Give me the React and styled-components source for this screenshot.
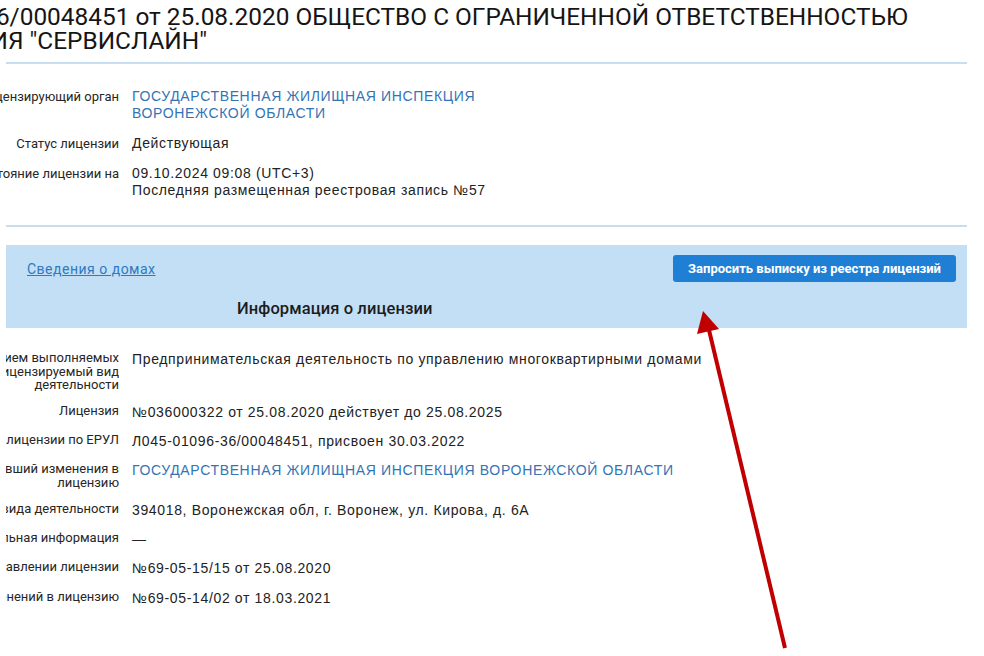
import React from 'react';
import styled, { createGlobalStyle } from 'styled-components';

const fontRoboto = 'Roboto, "Liberation Sans", Arial, sans-serif';
const fontArial = '"Liberation Sans", Arial, sans-serif';
const colorText = '#222222';
const colorLabel = '#262626';
const colorLink = '#3474b4';
const colorLine = '#c7ddf0';
const colorPanel = '#c3dff5';
const colorButton = '#1f7fd5';

const GlobalStyle = createGlobalStyle`
  html, body {
    margin: 0;
    padding: 0;
    background: #ffffff;
    overflow: hidden;
  }
`;

const Page = styled.div`
  position: relative;
  width: 984px;
  height: 656px;
  overflow: hidden;
  background: #ffffff;
`;

const Sheet = styled.div`
  width: 961px;
  margin-left: 6px;
`;

const Title = styled.h1`
  font-family: ${fontRoboto};
  font-weight: 400;
  font-size: 24.4px;
  line-height: 24px;
  color: #151515;
  margin: 0;
  padding-top: 5px;
  padding-bottom: 9px;
  white-space: nowrap;
`;

const TitleLine = styled.div`
  margin-left: ${(p) => p.$shift}px;
`;

const Divider = styled.div`
  height: 2px;
  background: ${colorLine};
`;

const InfoList = styled.div`
  display: flex;
  flex-direction: column;
  padding: ${(p) => p.$pad};
  gap: ${(p) => p.$gap}px;
`;

const InfoRow = styled.div`
  display: grid;
  grid-template-columns: 113px 1fr;
  column-gap: 13px;
  align-items: start;
`;

const LabelCell = styled.div`
  display: flex;
  justify-content: flex-end;
  min-width: 0;
  overflow: ${(p) => (p.$clip ? 'hidden' : 'visible')};
`;

const Label = styled.div`
  flex: 0 0 auto;
  font-family: ${fontRoboto};
  font-size: 13px;
  line-height: ${(p) => p.$lh}px;
  color: ${colorLabel};
  text-align: right;
  white-space: nowrap;
`;

const Value = styled.div`
  font-family: ${fontArial};
  font-size: 14px;
  letter-spacing: 0.65px;
  line-height: 17px;
  color: ${(p) => (p.$link ? colorLink : colorText)};
`;

const Panel = styled.section`
  margin-top: 18px;
  background: ${colorPanel};
  height: 83px;
  box-sizing: border-box;
  padding-top: 10px;
`;

const PanelTop = styled.div`
  display: flex;
  justify-content: space-between;
  align-items: center;
  padding: 0 11px 0 21px;
`;

const HousesLink = styled.a`
  font-family: ${fontRoboto};
  font-size: 14px;
  letter-spacing: 0.5px;
  color: #2d7ac2;
  text-decoration: underline;
  cursor: pointer;
`;

const RequestButton = styled.button`
  font-family: ${fontRoboto};
  font-weight: 700;
  font-size: 13px;
  color: #ffffff;
  background: ${colorButton};
  border: 0;
  border-radius: 3px;
  height: 27px;
  width: 283px;
  padding: 0;
  cursor: pointer;
`;

const PanelHeading = styled.h2`
  font-family: ${fontRoboto};
  font-weight: 500;
  font-size: 16.5px;
  letter-spacing: 0.1px;
  line-height: 20px;
  color: #1c1c1c;
  margin: 17px 0 0 231px;
`;

const ArrowOverlay = styled.svg`
  position: absolute;
  left: 0;
  top: 0;
  pointer-events: none;
`;

const topRows = [
  { label: ['Лицензирующий орган'], value: ['ГОСУДАРСТВЕННАЯ ЖИЛИЩНАЯ ИНСПЕКЦИЯ', 'ВОРОНЕЖСКОЙ ОБЛАСТИ'], link: true },
  { label: ['Статус лицензии'], value: ['Действующая'] },
  { label: ['Состояние лицензии на'], value: ['09.10.2024 09:08 (UTC+3)', 'Последняя размещенная реестровая запись №57'] },
];

const bottomRows = [
  {
    label: ['Перечень работ с наименованием выполняемых', 'работ, составляющих лицензируемый вид', 'деятельности'],
    value: ['Предпринимательская деятельность по управлению многоквартирными домами'],
  },
  { label: ['Лицензия'], value: ['№036000322 от 25.08.2020 действует до 25.08.2025'] },
  { label: ['Номер лицензии по ЕРУЛ'], value: ['Л045-01096-36/00048451, присвоен 30.03.2022'] },
  { label: ['Орган, вносивший изменения в', 'лицензию'], value: ['ГОСУДАРСТВЕННАЯ ЖИЛИЩНАЯ ИНСПЕКЦИЯ ВОРОНЕЖСКОЙ ОБЛАСТИ'], link: true },
  { label: ['Адрес места осуществления лицензируемого вида деятельности'], value: ['394018, Воронежская обл, г. Воронеж, ул. Кирова, д. 6А'] },
  { label: ['Дополнительная информация'], value: ['—'] },
  { label: ['Приказ о предоставлении лицензии'], value: ['№69-05-15/15 от 25.08.2020'] },
  { label: ['Приказ о внесении изменений в лицензию'], value: ['№69-05-14/02 от 18.03.2021'] },
];

const renderLines = (lines) =>
  lines.map((line, i) => (
    <React.Fragment key={line}>
      {i > 0 && <br />}
      {line}
    </React.Fragment>
  ));

const InfoBlock = ({ rows, pad, gap, labelLh, clip }) => (
  <InfoList $pad={pad} $gap={gap}>
    {rows.map((row) => (
      <InfoRow key={row.label[0]}>
        <LabelCell $clip={clip}>
          <Label $lh={labelLh}>{renderLines(row.label)}</Label>
        </LabelCell>
        <Value $link={row.link}>{renderLines(row.value)}</Value>
      </InfoRow>
    ))}
  </InfoList>
);

const App = () => (
  <Page>
    <GlobalStyle />
    <Sheet>
      <Title>
        <TitleLine $shift={-308}>
          Лицензия №Л045-01096-36/00048451 от 25.08.2020 ОБЩЕСТВО С ОГРАНИЧЕННОЙ ОТВЕТСТВЕННОСТЬЮ
        </TitleLine>
        <TitleLine $shift={-313}>УПРАВЛЯЮЩАЯ КОМПАНИЯ "СЕРВИСЛАЙН"</TitleLine>
      </Title>
      <Divider />
      <InfoBlock rows={topRows} pad="24px 0 26px" gap={13} labelLh={17} />
      <Divider />
      <Panel>
        <PanelTop>
          <HousesLink>Сведения о домах</HousesLink>
          <RequestButton>Запросить выписку из реестра лицензий</RequestButton>
        </PanelTop>
        <PanelHeading>Информация о лицензии</PanelHeading>
      </Panel>
      <InfoBlock rows={bottomRows} pad="23px 0 0" gap={12.3} labelLh={13.5} clip />
    </Sheet>
    <ArrowOverlay width="984" height="656" viewBox="0 0 984 656">
      <line x1="785" y1="648" x2="709" y2="330" stroke="#c00000" strokeWidth="4" />
      <polygon points="703,311 697,334 719,329" fill="#c00000" />
    </ArrowOverlay>
  </Page>
);

export default App;
